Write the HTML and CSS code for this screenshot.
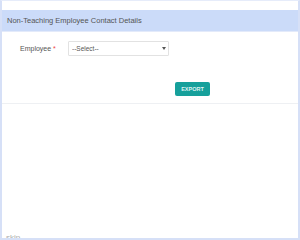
FILE: index.html
```html
<!DOCTYPE html>
<html lang="en">
<head>
    <meta charset="UTF-8">
    <meta name="viewport" content="width=device-width, initial-scale=1.0">
    <title>Non-Teaching Employee Contact Details</title>
    <link rel="stylesheet" href="styles.css">
</head>
<body>

<div class="frame">
    <div class="panel">
        <div class="panel-heading">Non-Teaching Employee Contact Details</div>
        <div class="panel-body">
            <div class="form-row">
                <label class="form-label" for="employee">Employee <span class="req">*</span></label>
                <span class="select-wrap">
                    <select id="employee" class="form-select">
                        <option>--Select--</option>
                    </select>
                    <svg class="caret" width="4" height="3" viewBox="0 0 4 3"><path d="M0 0H4L2 3Z" fill="#555"/></svg>
                </span>
            </div>
            <div class="actions">
                <button class="button">EXPORT</button>
            </div>
        </div>
    </div>
    <div class="footer">skip</div>
</div>

</body>
</html>
```

FILE: styles.css
```css
body {
    font-family: "Liberation Sans", Arial, sans-serif;
    margin: 0;
    padding: 0;
    background: #fff;
    color: #555;
}

.frame {
    box-sizing: border-box;
    width: 300px;
    height: 240px;
    border-left: 2px solid #d6e0f7;
    border-right: 2px solid #d6e0f7;
    border-top: 1px solid #e6ecfa;
    border-bottom: 2px solid #d6e0f7;
    padding-top: 9px;
    display: flex;
    flex-direction: column;
    overflow: hidden;
}

.panel {
    border-bottom: 1px solid #eef0f3;
}

.panel-heading {
    background: #cbdbf9;
    height: 21px;
    line-height: 21px;
    padding-left: 5px;
    font-size: 7.5px;
    color: #555;
    border-bottom: 1px solid #e3eafa;
}

.panel-body {
    padding: 9px 0 7px;
}

.form-row {
    display: flex;
    align-items: center;
}

.form-label {
    width: 48px;
    padding-left: 18px;
    font-size: 7px;
    color: #555;
}

.req {
    color: #e44;
}

.select-wrap {
    position: relative;
    display: flex;
}

.form-select {
    -webkit-appearance: none;
    appearance: none;
    width: 101px;
    height: 15px;
    padding: 0 3px;
    font-family: "Liberation Sans", Arial, sans-serif;
    font-size: 6.5px;
    color: #555;
    background: #fff;
    border: 1px solid #e2e2e2;
    border-radius: 1px;
}

.caret {
    position: absolute;
    right: 3px;
    top: 6px;
}

.actions {
    display: flex;
    padding: 26px 0 0 173px;
}

.button {
    width: 35px;
    height: 14px;
    padding: 0;
    font-family: "Liberation Sans", Arial, sans-serif;
    font-size: 5.5px;
    font-weight: bold;
    color: #dff3f2;
    background-color: #16a09b;
    border: none;
    border-radius: 2px;
}

.footer {
    margin-top: auto;
    height: 4px;
    overflow: hidden;
    padding-left: 4px;
    font-size: 8px;
    line-height: 8px;
    color: #aaa;
}
```
